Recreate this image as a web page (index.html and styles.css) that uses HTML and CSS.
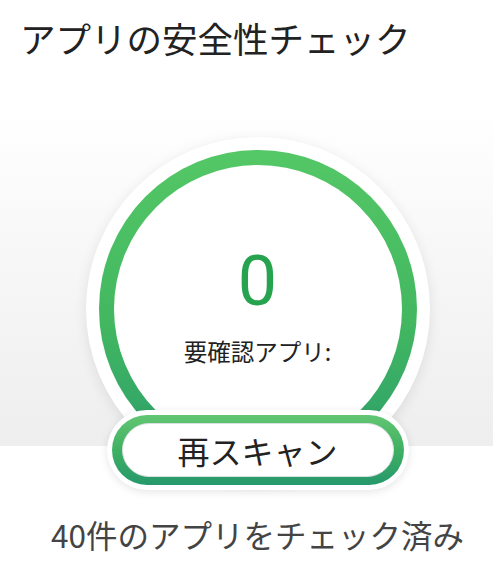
FILE: index.html
```html
<!DOCTYPE html>
<html lang="ja">
<head>
<meta charset="utf-8">
<title>アプリの安全性チェック</title>
<link rel="stylesheet" href="styles.css">
</head>
<body>
<h1 class="title">アプリの安全性チェック</h1>
<section class="stage">
  <div class="disc">
    <div class="ring">
      <div class="face">
        <div class="count">0</div>
        <div class="label">要確認アプリ:</div>
      </div>
    </div>
  </div>
  <div class="btn-outer">
    <div class="btn-ring">
      <button class="btn">再スキャン</button>
    </div>
  </div>
  <p class="summary">40件のアプリをチェック済み</p>
</section>
</body>
</html>
```

FILE: styles.css
```css
html, body {
  margin: 0;
  padding: 0;
  background: #ffffff;
}
body {
  width: 493px;
  height: 578px;
  overflow: hidden;
  font-family: "Noto Sans CJK JP", "Noto Sans", sans-serif;
  color: #222;
}
.title {
  margin: 0;
  padding: 17px 0 0 20px;
  font-size: 35.5px;
  line-height: 42px;
  font-weight: 400;
  color: #222;
}
.stage {
  padding: 78px 0 0 22px;
  display: flex;
  flex-direction: column;
  align-items: center;
  background: linear-gradient(to bottom, #ffffff 50px, #f7f7f7 200px, #eeeeee 387px, #ffffff 387px);
}
.disc {
  width: 344px;
  height: 344px;
  box-sizing: border-box;
  padding: 13px;
  border-radius: 50%;
  background: #ffffff;
  box-shadow: 0 3px 14px rgba(0, 0, 0, 0.09);
}
.ring {
  width: 318px;
  height: 318px;
  box-sizing: border-box;
  padding: 15px;
  border-radius: 50%;
  background: linear-gradient(to bottom, #54c766 0%, #42b760 55%, #2a9c6e 100%);
}
.face {
  width: 288px;
  height: 288px;
  border-radius: 50%;
  background: #ffffff;
  display: flex;
  flex-direction: column;
  align-items: center;
  box-sizing: border-box;
  padding-top: 81px;
}
.count {
  font-family: Roboto, "Noto Sans", sans-serif;
  font-size: 70px;
  line-height: 70px;
  color: #27a34f;
}
.label {
  margin-top: 24px;
  font-size: 23.5px;
  line-height: 23px;
  font-weight: 400;
  color: #222;
}
.btn-outer {
  margin-top: -71px;
  width: 302px;
  height: 80px;
  box-sizing: border-box;
  padding: 5px;
  border-radius: 40px;
  background: #ffffff;
  box-shadow: 0 2px 8px rgba(0, 0, 0, 0.10);
}
.btn-ring {
  height: 70px;
  box-sizing: border-box;
  padding: 8px 10px;
  border-radius: 35px;
  background: linear-gradient(to bottom, #62c673 0%, #3fb062 50%, #26986c 100%);
}
.btn {
  display: block;
  width: 100%;
  height: 54px;
  margin: 0;
  padding: 0;
  border: 1px solid #dcdfe2;
  border-radius: 27px;
  background: #ffffff;
  font-family: "Noto Sans CJK JP", sans-serif;
  font-size: 32px;
  line-height: 52px;
  font-weight: 400;
  color: #222;
}
.summary {
  margin: 29px 0 0 0;
  font-size: 31.5px;
  line-height: 31px;
  font-weight: 400;
  color: #444;
}
```
